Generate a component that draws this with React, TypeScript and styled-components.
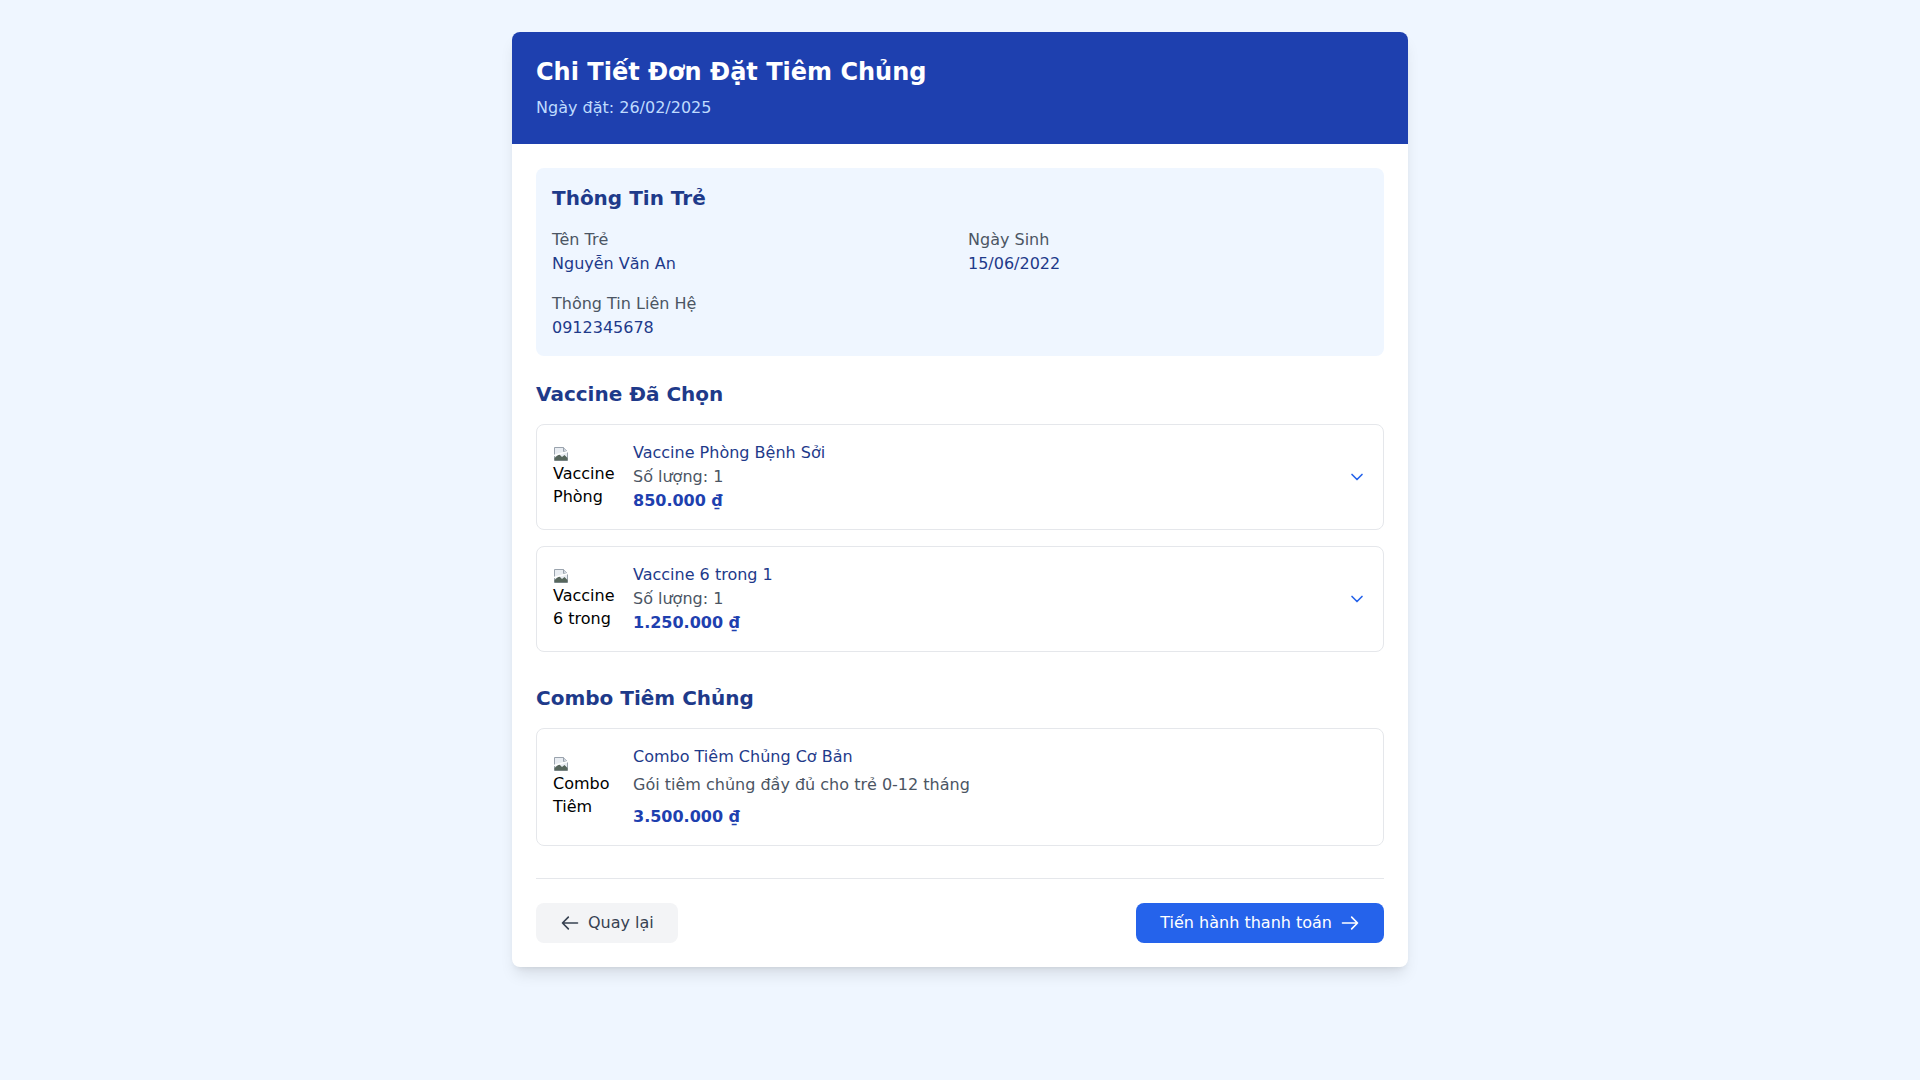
import { FC } from 'react';
import styled, { createGlobalStyle } from 'styled-components';

const GlobalStyle = createGlobalStyle`
    * { box-sizing: border-box; }
    html, body { margin: 0; padding: 0; }
    body {
        background-color: #eff6ff;
        font-family: "DejaVu Sans", sans-serif;
        font-size: 16px;
        line-height: 24px;
        color: #111827;
    }
`;

const Page = styled.div`
    min-height: 1080px;
    padding: 32px 0;
    background-color: #eff6ff;
`;

const Card = styled.div`
    width: 896px;
    margin: 0 auto;
    background-color: #ffffff;
    border-radius: 8px;
    overflow: hidden;
    box-shadow: 0 10px 15px -3px rgba(0, 0, 0, 0.1), 0 4px 6px -4px rgba(0, 0, 0, 0.1);
`;

// header xanh
const Header = styled.div`
    background-color: #1e40af;
    padding: 24px;
`;

const Title = styled.h1`
    margin: 0;
    font-size: 24px;
    line-height: 32px;
    font-weight: 700;
    color: #ffffff;
`;

const OrderDate = styled.p`
    margin: 8px 0 0;
    color: #bfdbfe;
`;

const Body = styled.div`
    padding: 24px;
`;

const InfoBox = styled.div`
    background-color: #eff6ff;
    border-radius: 8px;
    padding: 16px;
`;

const SectionTitle = styled.h2<{ $top?: number }>`
    margin: ${(p) => p.$top ?? 0}px 0 16px;
    font-size: 20px;
    line-height: 28px;
    font-weight: 700;
    color: #1e3a8a;
`;

const InfoGrid = styled.div`
    display: grid;
    grid-template-columns: 1fr 1fr;
    gap: 16px;
`;

const Label = styled.p`
    margin: 0;
    color: #4b5563;
`;

const Value = styled.p`
    margin: 0;
    color: #1e3a8a;
`;

const List = styled.div`
    display: flex;
    flex-direction: column;
    gap: 16px;
`;

// item vaccine / combo
const Item = styled.div`
    display: flex;
    align-items: center;
    border: 1px solid #e5e7eb;
    border-radius: 8px;
    padding: 16px;
`;

// anh bi loi -> icon + alt text
const Thumb = styled.div`
    flex-shrink: 0;
    width: 64px;
    height: 64px;
    margin-right: 16px;
    color: #000000;
    line-height: 23px;
    white-space: nowrap;
    svg {
        display: block;
        margin-top: 1px;
    }
`;

const ItemInfo = styled.div`
    flex: 1;
`;

const ItemName = styled.p`
    margin: 0;
    color: #1e3a8a;
`;

const Qty = styled.p`
    margin: 0;
    color: #4b5563;
`;

const Desc = styled.p`
    margin: 4px 0 0;
    color: #4b5563;
`;

const Price = styled.p<{ $top?: number }>`
    margin: ${(p) => p.$top ?? 0}px 0 0;
    font-weight: 700;
    color: #1e40af;
`;

const Toggle = styled.button`
    display: flex;
    align-items: center;
    justify-content: center;
    padding: 0;
    border: none;
    background: none;
    color: #2563eb;
    cursor: pointer;
`;

const Footer = styled.div`
    display: flex;
    justify-content: space-between;
    align-items: center;
    margin-top: 32px;
    padding-top: 24px;
    border-top: 1px solid #e5e7eb;
`;

const Button = styled.button<{ $primary?: boolean }>`
    display: flex;
    align-items: center;
    gap: 8px;
    height: 40px;
    padding: 8px 24px;
    border: none;
    border-radius: 8px;
    font-family: "DejaVu Sans", sans-serif;
    font-size: 16px;
    line-height: 24px;
    background-color: ${(p) => (p.$primary ? '#2563eb' : '#f3f4f6')};
    color: ${(p) => (p.$primary ? '#ffffff' : '#374151')};
    cursor: pointer;
`;

const BrokenImage: FC = () => (
    <svg width="16" height="16" viewBox="0 0 16 16">
        <path d="M1.5 1.5h9l4 4v9h-13z" fill="#e9edf2" stroke="#9aa3ad" strokeWidth="1" />
        <path d="M1.5 14.5 L1.5 12 L6 8 L9 11 L11.5 9 L14.5 12 V14.5Z" fill="#56665c" />
        <path d="M10.5 1.5v4h4" fill="#cfd6de" stroke="#9aa3ad" strokeWidth="1" />
        <path d="M1 9.5 L15 5.5" stroke="#ffffff" strokeWidth="1.4" />
    </svg>
);

const Chevron: FC = () => (
    <svg width="20" height="20" viewBox="0 0 24 24" fill="none" stroke="currentColor" strokeWidth="2" strokeLinecap="round" strokeLinejoin="round">
        <path d="m6 9 6 6 6-6" />
    </svg>
);

const Arrow: FC<{ dir: 'left' | 'right' }> = ({ dir }) => (
    <svg width="20" height="20" viewBox="0 0 24 24" fill="none" stroke="currentColor" strokeWidth="2" strokeLinecap="round" strokeLinejoin="round">
        <path d={dir === 'left' ? 'M10 19l-7-7m0 0l7-7m-7 7h18' : 'M14 5l7 7m0 0l-7 7m7-7H3'} />
    </svg>
);

// alt hien thi: chi phan vua trong o 64px
const vaccines = [
    { name: 'Vaccine Phòng Bệnh Sởi', alt: ['Vaccine', 'Phòng'], qty: 1, price: '850.000 ₫' },
    { name: 'Vaccine 6 trong 1', alt: ['Vaccine', '6 trong'], qty: 1, price: '1.250.000 ₫' },
];

const App: FC = () => {
    return (
        <>
            <GlobalStyle />
            <Page>
                <Card>
                    <Header>
                        <Title>Chi Tiết Đơn Đặt Tiêm Chủng</Title>
                        <OrderDate>Ngày đặt: 26/02/2025</OrderDate>
                    </Header>

                    <Body>
                        <InfoBox>
                            <SectionTitle>Thông Tin Trẻ</SectionTitle>
                            <InfoGrid>
                                <div>
                                    <Label>Tên Trẻ</Label>
                                    <Value>Nguyễn Văn An</Value>
                                </div>
                                <div>
                                    <Label>Ngày Sinh</Label>
                                    <Value>15/06/2022</Value>
                                </div>
                                <div>
                                    <Label>Thông Tin Liên Hệ</Label>
                                    <Value>0912345678</Value>
                                </div>
                            </InfoGrid>
                        </InfoBox>

                        <SectionTitle $top={24}>Vaccine Đã Chọn</SectionTitle>
                        <List>
                            {vaccines.map((v) => (
                                <Item key={v.name}>
                                    <Thumb title={v.name}>
                                        <BrokenImage />
                                        {v.alt[0]}
                                        <br />
                                        {v.alt[1]}
                                    </Thumb>
                                    <ItemInfo>
                                        <ItemName>{v.name}</ItemName>
                                        <Qty>Số lượng: {v.qty}</Qty>
                                        <Price>{v.price}</Price>
                                    </ItemInfo>
                                    <Toggle>
                                        <Chevron />
                                    </Toggle>
                                </Item>
                            ))}
                        </List>

                        <SectionTitle $top={32}>Combo Tiêm Chủng</SectionTitle>
                        <List>
                            <Item>
                                <Thumb title="Combo Tiêm Chủng Cơ Bản">
                                    <BrokenImage />
                                    Combo
                                    <br />
                                    Tiêm
                                </Thumb>
                                <ItemInfo>
                                    <ItemName>Combo Tiêm Chủng Cơ Bản</ItemName>
                                    <Desc>Gói tiêm chủng đầy đủ cho trẻ 0-12 tháng</Desc>
                                    <Price $top={8}>3.500.000 ₫</Price>
                                </ItemInfo>
                            </Item>
                        </List>

                        <Footer>
                            <Button>
                                <Arrow dir="left" />
                                Quay lại
                            </Button>
                            <Button $primary>
                                Tiến hành thanh toán
                                <Arrow dir="right" />
                            </Button>
                        </Footer>
                    </Body>
                </Card>
            </Page>
        </>
    );
};

export default App;
